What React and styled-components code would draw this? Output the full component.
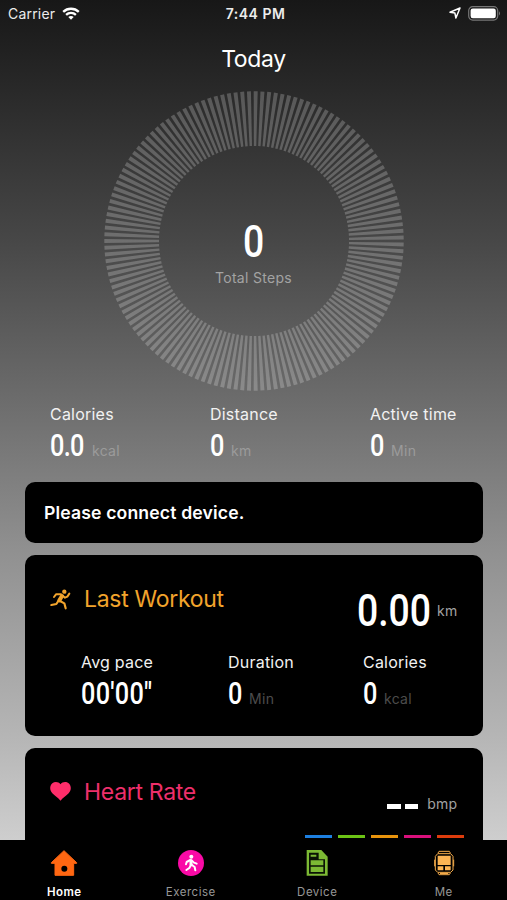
import React from "react";
import styled, { createGlobalStyle } from "styled-components";

const totals = [
  { label: "Calories", value: "0.0", unit: "kcal", width: 35, tracking: -0.8 },
  { label: "Distance", value: "0", unit: "km", width: 14 },
  { label: "Active time", value: "0", unit: "Min", width: 14 },
];

const workout = [
  { label: "Avg pace", value: "00'00\"", width: 73, tracking: 0.3 },
  { label: "Duration", value: "0", unit: "Min", width: 14 },
  { label: "Calories", value: "0", unit: "kcal", width: 14 },
];

const zones = ["#1d7fe0", "#6cc315", "#e8930c", "#d9107c", "#dd3c0c"];

const tabs = [
  { name: "Home", icon: HomeIcon, active: true },
  { name: "Exercise", icon: WalkIcon },
  { name: "Device", icon: DeviceIcon },
  { name: "Me", icon: WatchIcon },
];

const TICKS = 139;

export default function App() {
  return (
    <>
      <GlobalStyle />
      <Screen>
        <StatusBar>
          <div className="left">
            Carrier
            <WifiIcon />
          </div>
          <div className="time">7:44 PM</div>
          <div className="right">
            <LocationIcon />
            <BatteryIcon />
          </div>
        </StatusBar>
        <Title>Today</Title>
        <StepsRing />
        <Totals>
          {totals.map((item) => (
            <Stat key={item.label} {...item} unitColor="#9b9b9b" />
          ))}
        </Totals>
        <Cards>
          <Notice>Please connect device.</Notice>
          <WorkoutCard>
            <CardHead>
              <RunnerIcon />
              <CardTitle $color="#f2a42c">Last Workout</CardTitle>
              <Distance>
                <Digits $size={45} $width={73}>
                  <span>0.00</span>
                </Digits>
                <small>km</small>
              </Distance>
            </CardHead>
            <WorkoutStats>
              {workout.map((item) => (
                <Stat key={item.label} {...item} unitColor="#4c4c4c" />
              ))}
            </WorkoutStats>
          </WorkoutCard>
          <HeartCard>
            <CardHead>
              <HeartIcon />
              <CardTitle $color="#ee2f6b">Heart Rate</CardTitle>
              <Pulse>
                <i />
                <i />
                <small>bmp</small>
              </Pulse>
            </CardHead>
            <Zones>
              {zones.map((color) => (
                <Zone key={color} $color={color} />
              ))}
            </Zones>
          </HeartCard>
        </Cards>
        <TabBar>
          {tabs.map(({ name, icon: Icon, active }) => (
            <Tab key={name} $active={active}>
              <Icon />
              <span>{name}</span>
            </Tab>
          ))}
        </TabBar>
      </Screen>
    </>
  );
}

function Stat({ label, value, unit, width, tracking, unitColor }) {
  return (
    <StatBox>
      <StatLabel>{label}</StatLabel>
      <StatValue>
        <Digits $size={30.5} $width={width} $tracking={tracking}>
          <span>{value}</span>
        </Digits>
        {unit && <Unit $color={unitColor}>{unit}</Unit>}
      </StatValue>
    </StatBox>
  );
}

function StepsRing() {
  return (
    <Ring>
      <svg width="300" height="300" viewBox="0 0 300 300" fill="#fff" fillOpacity="0.22">
        {/* every tick narrows towards the centre */}
        {Array.from({ length: TICKS }, (_, i) => (
          <path
            key={i}
            d="M.3 148L55 148.8V151.2L.3 152Z"
            transform={`rotate(${(i * 360) / TICKS} 150 150)`}
          />
        ))}
      </svg>
      <RingLabel>
        <Digits $size={45} $width={21}>
          <span>0</span>
        </Digits>
        <p>Total Steps</p>
      </RingLabel>
    </Ring>
  );
}

function WifiIcon() {
  return (
    <svg width="18" height="13" viewBox="0 0 18 13" fill="none" stroke="#fff" strokeWidth="2.3">
      <path d="M1.2 4.9C5.6 .7 12.4 .7 16.8 4.9" />
      <path d="M4.1 7.9C6.8 5.3 11.2 5.3 13.9 7.9" />
      <path d="M6.3 10.1C7.8 8.7 10.2 8.7 11.7 10.1L9 12.8Z" fill="#fff" stroke="none" />
    </svg>
  );
}

function LocationIcon() {
  return (
    <svg width="12" height="12" viewBox="0 0 12 12" fill="none" stroke="#fff" strokeWidth="1.5" strokeLinejoin="round">
      <path d="M11 1L1 5.2L5.9 6.1L6.9 11Z" />
    </svg>
  );
}

function BatteryIcon() {
  return (
    <svg width="33" height="15" viewBox="0 0 33 15">
      <rect x=".7" y=".7" width="29" height="13.4" rx="4" fill="none" stroke="#777" strokeWidth="1.2" />
      <rect x="2.6" y="2.6" width="25.2" height="9.6" rx="2.2" fill="#fff" />
      <path d="M31 5.2Q33 7.4 31 9.6Z" fill="#777" />
    </svg>
  );
}

function RunnerIcon() {
  return (
    <svg width="21" height="21" viewBox="151 113 63 63" fill="none" stroke="#f2a42c" strokeLinecap="round" strokeLinejoin="round">
      <circle cx="194" cy="121" r="6.5" fill="#f2a42c" stroke="none" />
      <path strokeWidth="6" d="M163 137L169 129L184 129M190 134L196 139L203 136L209 127" />
      <path strokeWidth="12" d="M187 134L179 147" />
      <path strokeWidth="6.5" d="M176 149L170 158L155 161M181 149L194 156L198 171" />
    </svg>
  );
}

function HeartIcon() {
  return (
    <svg width="21" height="19" viewBox="0 0 63 57" fill="#ff2d6a">
      <path d="M31.5 7C26-1 14-2 7 4C-2 12 -1 25 7 34C14 42 24 47 31.5 56C39 47 49 42 56 34C64 25 65 12 56 4C49-2 37-1 31.5 7Z" />
    </svg>
  );
}

function HomeIcon() {
  return (
    <svg width="28" height="28" viewBox="150 343 84 84">
      <path
        fill="#ff6712"
        stroke="#ff6712"
        strokeWidth="3"
        strokeLinejoin="round"
        d="M192 348L230 384V386H221V422H165V386H154V384Z"
      />
      <circle cx="193" cy="402" r="9" fill="#000" />
    </svg>
  );
}

function WalkIcon() {
  return (
    <svg width="28" height="28" viewBox="531 343 84 84" fill="none" stroke="#fff" strokeLinecap="round" strokeLinejoin="round">
      <circle cx="573" cy="385" r="39" fill="#fa0aa6" stroke="none" />
      <circle cx="574" cy="366" r="6" fill="#fff" stroke="none" />
      <path strokeWidth="9" d="M573 378V390" />
      <path strokeWidth="6" d="M571 376L560 382L558 389M575 377L582 384L590 387M573 391L568 400L559 406M575 390L584 397L586 407" />
    </svg>
  );
}

function DeviceIcon() {
  return (
    <svg width="28" height="28" viewBox="146 343 84 84">
      <path fill="#7cb934" d="M157 346H201L220 366V423H157Z" />
      <path fill="#0a1204" d="M164 354H193V374H212V417H164Z" />
      <path fill="#7cb934" d="M169 360H186V366H169ZM169 377H207V392H169ZM169 396H207V412H169Z" />
    </svg>
  );
}

function WatchIcon() {
  return (
    <svg width="28" height="28" viewBox="526 343 84 84" fill="none" stroke="#f4ab4a" strokeWidth="3">
      <path d="M550 355L553 350H584L587 355M550 415L553 420H584L587 415" />
      <path d="M549 357H588L595 365V406L588 413H549L542 406V365Z" />
      <path strokeWidth="3" d="M540 375V395M597 375V395" />
      <path fill="#fbb454" stroke="none" d="M549 363H588V391H549ZM549 395H566V407H549ZM571 395H588V407H571Z" />
      <path d="M556 416H581" strokeWidth="4" />
    </svg>
  );
}

const GlobalStyle = createGlobalStyle`
  * {
    box-sizing: border-box;
  }
  body {
    margin: 0;
    overflow: hidden;
    font-family: Inter, "Liberation Sans", sans-serif;
    color: #fff;
  }
  p {
    margin: 0;
  }
  svg {
    display: block;
    flex: none;
  }
`;

const Screen = styled.div`
  display: flex;
  flex-direction: column;
  height: 900px;
  width: 507px;
  overflow: hidden;
  background: linear-gradient(#171717 0, #292929 90px, #474747 240px, #6b6b6b 395px, #909090 550px, #b5b5b5 735px, #cecece 840px);
`;

const StatusBar = styled.header`
  display: grid;
  grid-template-columns: 1fr auto 1fr;
  align-items: center;
  height: 26px;
  padding: 0 6px 0 8px;
  flex: none;
  font-size: 14px;
  letter-spacing: 0.2px;
  color: #ececec;
  .left {
    display: flex;
    align-items: center;
    gap: 7px;
  }
  .time {
    font-weight: 600;
    letter-spacing: 0.5px;
    padding-left: 2px;
  }
  .right {
    display: flex;
    align-items: center;
    justify-content: flex-end;
    gap: 7px;
  }
`;

const Title = styled.h1`
  margin: 0;
  height: 65px;
  flex: none;
  line-height: 66px;
  font-size: 23px;
  letter-spacing: -0.35px;
  font-weight: 400;
  text-align: center;
`;

const Ring = styled.section`
  display: grid;
  place-items: center;
  height: 300px;
  flex: none;
  > * {
    grid-area: 1 / 1;
  }
`;

const RingLabel = styled.div`
  display: flex;
  flex-direction: column;
  align-items: center;
  padding-top: 28px;
  gap: 6px;
  p {
    font-size: 14px;
    line-height: 20px;
    letter-spacing: 0.3px;
    color: #a3a3a3;
  }
`;

/* narrow digits: Roboto squeezed sideways inside a box of the final width */
const Digits = styled.div`
  width: ${({ $width }) => $width}px;
  flex: none;
  font-family: Roboto, sans-serif;
  font-size: ${({ $size }) => $size}px;
  font-weight: 500;
  line-height: 0.9;
  letter-spacing: ${({ $tracking = 0 }) => $tracking}px;
  white-space: nowrap;
  span {
    display: inline-block;
    transform: scaleX(0.83);
    transform-origin: left;
  }
`;

const Totals = styled.section`
  display: grid;
  grid-template-columns: 160px 160px 1fr;
  height: 91px;
  flex: none;
  padding: 13px 0 0 50px;
`;

const StatBox = styled.div`
  display: flex;
  flex-direction: column;
`;

const StatLabel = styled.div`
  font-size: 16px;
  line-height: 21px;
  letter-spacing: 0.22px;
  color: #f2f2f2;
`;

const StatValue = styled.div`
  display: flex;
  align-items: baseline;
  gap: 7px;
  margin-top: 7px;
`;

const Unit = styled.span`
  font-size: 14px;
  letter-spacing: 0.3px;
  color: ${({ $color }) => $color};
`;

const Cards = styled.main`
  display: flex;
  flex-direction: column;
  gap: 12px;
  flex: 1;
  min-height: 0;
  overflow: hidden;
  padding: 0 24.5px 0 25px;
`;

const Card = styled.section`
  flex: none;
  border-radius: 10px;
  background: #000;
`;

const Notice = styled(Card)`
  height: 61px;
  padding-left: 19px;
  line-height: 62px;
  font-size: 17.6px;
  font-weight: 600;
  letter-spacing: 0.15px;
`;

const WorkoutCard = styled(Card)`
  height: 181px;
  padding: 31px 25px 0;
`;

const HeartCard = styled(Card)`
  height: 181px;
  padding: 31px 25px 0;
`;

const CardHead = styled.div`
  display: flex;
  align-items: flex-start;
  height: 66px;
  > svg {
    margin-top: 3px;
  }
  small {
    font-size: 14px;
    letter-spacing: 0.3px;
    color: #a2a2a2;
  }
`;

const CardTitle = styled.h2`
  flex: 1;
  margin: -2px 0 0 13px;
  line-height: 30px;
  font-size: 23px;
  letter-spacing: -0.3px;
  font-weight: 400;
  color: ${({ $color }) => $color};
`;

const Distance = styled.div`
  display: flex;
  gap: 7px;
  margin-top: 5px;
  small {
    margin-top: 11px;
  }
`;

const Pulse = styled.div`
  display: flex;
  align-items: center;
  gap: 4px;
  margin-top: 16px;
  i {
    width: 13.5px;
    height: 5px;
    margin-top: 5px;
    background: #fff;
  }
  small {
    margin-left: 5px;
  }
`;

const WorkoutStats = styled.div`
  display: grid;
  grid-template-columns: 147px 135px 1fr;
  padding-left: 31px;
`;

const Zones = styled.div`
  display: flex;
  justify-content: flex-end;
  gap: 6px;
  margin: -10px -6.5px 0 0;
`;

const Zone = styled.div`
  width: 27px;
  height: 3px;
  background: ${({ $color }) => $color};
`;

const TabBar = styled.nav`
  display: grid;
  grid-template-columns: repeat(4, 1fr);
  height: 60px;
  flex: none;
  padding-left: 1px;
  background: #000;
`;

const Tab = styled.div`
  display: flex;
  flex-direction: column;
  align-items: center;
  padding-top: 9px;
  gap: 7px;
  font-size: 11.5px;
  line-height: 16px;
  letter-spacing: 0.5px;
  font-weight: ${({ $active }) => ($active ? 600 : 400)};
  color: ${({ $active }) => ($active ? "#fff" : "#979797")};
`;
